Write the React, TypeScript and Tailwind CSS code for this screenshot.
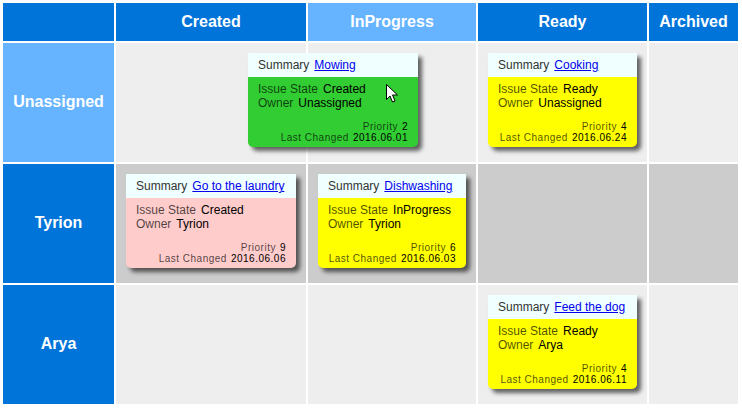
import React from 'react';

type Issue = {
  summary: string;
  state: string;
  owner: string;
  priority: number;
  changed: string;
  color: string;
};

const columns = ['Created', 'InProgress', 'Ready', 'Archived'];

const rows = [
  { name: 'Unassigned', highlight: true, cellBg: 'bg-[#eeeeee]' },
  { name: 'Tyrion', highlight: false, cellBg: 'bg-[#cccccc]' },
  { name: 'Arya', highlight: false, cellBg: 'bg-[#eeeeee]' },
];

const issues: Record<string, Issue> = {
  'Unassigned/Ready': { summary: 'Cooking', state: 'Ready', owner: 'Unassigned', priority: 4, changed: '2016.06.24', color: 'bg-[#ffff00]' },
  'Tyrion/Created': { summary: 'Go to the laundry', state: 'Created', owner: 'Tyrion', priority: 9, changed: '2016.06.06', color: 'bg-[#ffcccc]' },
  'Tyrion/InProgress': { summary: 'Dishwashing', state: 'InProgress', owner: 'Tyrion', priority: 6, changed: '2016.06.03', color: 'bg-[#ffff00]' },
  'Arya/Ready': { summary: 'Feed the dog', state: 'Ready', owner: 'Arya', priority: 4, changed: '2016.06.11', color: 'bg-[#ffff00]' },
};

const dragging: Issue = { summary: 'Mowing', state: 'Created', owner: 'Unassigned', priority: 2, changed: '2016.06.01', color: 'bg-[#32cd32]' };

function Card({ issue }: { issue: Issue }) {
  return (
    <div className={`flex h-[94px] flex-col rounded-b-[5px] shadow-[4px_4px_4px_rgba(0,0,0,0.6)] ${issue.color}`}>
      <div className="flex h-[24px] items-center gap-[5px] bg-[#f0ffff] pl-[10px] text-[12px] text-[#333]">
        <span>Summary</span>
        <a href="#" className="text-[#0000ee] underline">{issue.summary}</a>
      </div>
      <div className="flex flex-1 flex-col justify-between pb-[4px] pl-[10px] pr-[10px] pt-[5px]">
        <div className="text-[12px] leading-[14px]">
          <div className="flex gap-[5px]">
            <span className="text-black/70">Issue State</span>
            <span className="text-black">{issue.state}</span>
          </div>
          <div className="flex gap-[5px]">
            <span className="text-black/70">Owner</span>
            <span className="text-black">{issue.owner}</span>
          </div>
        </div>
        <div className="text-right text-[10px] leading-[11px] tracking-[0.5px]">
          <div>
            <span className="text-black/70">Priority</span>
            <span className="ml-[4px] text-black">{issue.priority}</span>
          </div>
          <div>
            <span className="text-black/70">Last Changed</span>
            <span className="ml-[4px] text-black">{issue.changed}</span>
          </div>
        </div>
      </div>
    </div>
  );
}

export default function App() {
  return (
    <div className="relative h-[409px] w-[742px] overflow-hidden bg-white font-['Liberation_Sans',Arial,sans-serif]">
      <div className="grid grid-cols-[111px_190px_168px_169px_89px] grid-rows-[38px_119px_119px_119px] gap-[2px] pl-[3px] pt-[3px]">
        <div className="bg-[#0074d9]" />
        {columns.map((c) => (
          <div
            key={c}
            className={`flex items-center justify-center text-[16px] font-bold text-white ${c === 'InProgress' ? 'bg-[#66b3ff]' : 'bg-[#0074d9]'}`}
          >
            {c}
          </div>
        ))}
        {rows.map((r) => (
          <React.Fragment key={r.name}>
            <div
              className={`flex items-center justify-center pb-[2px] text-[16px] font-bold text-white ${r.highlight ? 'bg-[#66b3ff]' : 'bg-[#0074d9]'}`}
            >
              {r.name}
            </div>
            {columns.map((c) => {
              const issue = issues[`${r.name}/${c}`];
              return (
                <div key={c} className={`${r.cellBg} px-[10px] pt-[10px]`}>
                  {issue && <Card issue={issue} />}
                </div>
              );
            })}
          </React.Fragment>
        ))}
      </div>

      {/* card being dragged */}
      <div className="absolute left-[248px] top-[53px] w-[170px]">
        <Card issue={dragging} />
      </div>

      {/* mouse pointer */}
      <svg className="absolute left-[386px] top-[84px]" width="13" height="20" viewBox="0 0 13 20">
        <path d="M0.5 0.5 L0.5 15.5 L4 12 L6.5 18 L9 17 L6.5 11 L11.5 11 Z" fill="white" stroke="black" strokeWidth="1" />
      </svg>
    </div>
  );
}
